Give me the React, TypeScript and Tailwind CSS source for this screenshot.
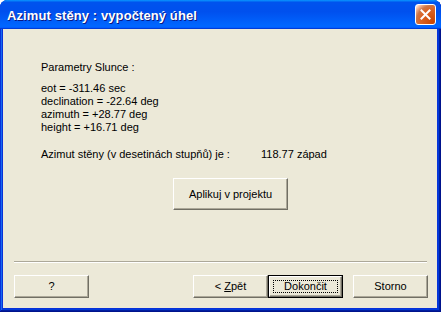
import type { ReactNode } from 'react';

const font = { fontFamily: '"Liberation Sans", Arial, sans-serif' };

function ClassicButton({ children, className = '', isDefault = false }: { children: ReactNode; className?: string; isDefault?: boolean }) {
  if (isDefault) {
    return (
      <button className={`border border-black bg-[#ece9d8] p-0 ${className}`}>
        <div className="flex h-full w-full items-center justify-center border border-t-white border-l-white border-b-[#716f64] border-r-[#716f64] shadow-[inset_-1px_-1px_#aca899] p-[3px]">
          <div className="flex h-full w-full items-center justify-center border border-dotted border-black">
            {children}
          </div>
        </div>
      </button>
    );
  }
  return (
    <button className={`flex items-center justify-center border border-t-white border-l-white border-b-[#716f64] border-r-[#716f64] bg-[#ece9d8] shadow-[inset_-1px_-1px_#aca899] ${className}`}>
      {children}
    </button>
  );
}

export default function App() {
  return (
    <div className="w-[441px] h-[312px] bg-white" style={font}>
      <div className="flex h-full w-full flex-col rounded-t-[8px] bg-[#0831d9] shadow-[inset_-1px_-1px_#00138c,inset_1px_1px_#0831d9,inset_-2px_-2px_#001ea0,inset_2px_2px_#166aee,inset_-3px_-3px_#003bda]">
        {/* title bar */}
        <div className="flex h-[29px] shrink-0 items-center rounded-t-[7px] bg-[linear-gradient(180deg,#0997ff,#0053ee_8%,#0050ee_40%,#0066ff_88%,#0066ff_93%,#005bff_95%,#003dd7_96%,#003dd7)] pl-[7px] pr-[5px]">
          <span className="flex-1 pt-[2px] text-[13px] font-bold leading-none tracking-[0.1px] text-white [text-shadow:1px_1px_#0a1883]">
            Azimut stěny : vypočtený úhel
          </span>
          <div className="flex h-[21px] w-[21px] items-center justify-center rounded-[3px] border border-white bg-[radial-gradient(circle_at_90%_90%,#cc4600_0,#dc6527_55%,#cd7546_70%,#ffccb2_90%,#fff_100%)]">
            <svg width="11" height="11" viewBox="0 0 11 11">
              <path d="M1.5 1.5 L9.5 9.5 M9.5 1.5 L1.5 9.5" stroke="white" strokeWidth="2" strokeLinecap="square" />
            </svg>
          </div>
        </div>

        {/* client area */}
        <div className="ml-[3px] mr-[4px] mb-[4px] flex flex-1 flex-col bg-[#ece9d8] text-[11px] leading-[13px] text-black">
          <div className="pl-[38px] pt-[32px]">
            <div>Parametry Slunce :</div>
            <div className="mt-[8px]">
              <div>eot = -311.46 sec</div>
              <div>declination = -22.64 deg</div>
              <div>azimuth = +28.77 deg</div>
              <div>height = +16.71 deg</div>
            </div>
            <div className="mt-[14px] flex">
              <span className="w-[220px]">Azimut stěny (v desetinách stupňů) je :</span>
              <span>118.77 západ</span>
            </div>
            <ClassicButton className="mt-[17px] ml-[132px] h-[32px] w-[115px]">Aplikuj v projektu</ClassicButton>
          </div>

          <div className="mt-[51px] ml-[11px] mr-[10px] h-[2px] border-t border-t-[#aca899] border-b border-b-white" />

          <div className="mt-[12px] flex pl-[11px] pr-[9px]">
            <ClassicButton className="h-[23px] w-[75px]">?</ClassicButton>
            <div className="flex-1" />
            <ClassicButton className="h-[23px] w-[75px]">
              &lt; <span className="ml-[3px] underline">Z</span>pět
            </ClassicButton>
            <ClassicButton isDefault className="h-[23px] w-[75px]">Dokončit</ClassicButton>
            <ClassicButton className="ml-[10px] h-[23px] w-[75px]">Storno</ClassicButton>
          </div>
        </div>
      </div>
    </div>
  );
}
